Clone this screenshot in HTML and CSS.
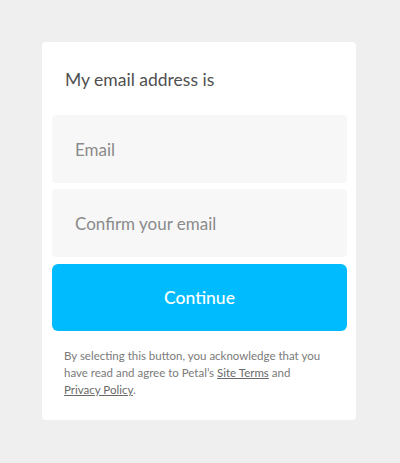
FILE: index.html
```html
<!DOCTYPE html>
<html>
<head>
<meta charset="utf-8">
<link rel="stylesheet" href="styles.css">
</head>
<body>
<div class="card">
  <div class="heading">My email address is</div>
  <div class="field">Email</div>
  <div class="field">Confirm your email</div>
  <button class="btn">Continue</button>
  <p class="note">By selecting this button, you acknowledge that you have read and agree to Petal’s <a href="#">Site Terms</a> and <a href="#">Privacy Policy</a>.</p>
</div>
</body>
</html>
```
FILE: styles.css
```css
html, body {
  margin: 0;
  padding: 0;
  background: #efefef;
}
body {
  padding: 42px 0 0 42px;
  font-family: Lato, "Open Sans", sans-serif;
}
.card {
  width: 314px;
  box-sizing: border-box;
  background: #fff;
  border-radius: 4px;
  padding: 10px 9px 22px 10px;
  display: flex;
  flex-direction: column;
}
.heading {
  padding: 15px 13px 23px;
  font-size: 17.5px;
  line-height: 25px;
  color: #505050;
}
.field {
  height: 68px;
  box-sizing: border-box;
  background: #f7f7f7;
  border-radius: 4px;
  padding: 0 23px;
  display: flex;
  align-items: center;
  font-size: 17px;
  color: #8a8a8a;
  margin-bottom: 6px;
}
.field + .field { margin-bottom: 0; }
.btn {
  margin-top: 7px;
  height: 67px;
  border: none;
  border-radius: 6px;
  background: #00bcfe;
  color: #fff;
  font-family: inherit;
  font-size: 17.5px;
  font-weight: 500;
}
.note {
  margin: 16px 0 0;
  padding: 0 20px 0 12px;
  font-size: 11.5px;
  line-height: 17px;
  color: #7a7a7a;
}
.note a {
  color: #6a6a6a;
  text-decoration: underline;
}
```
